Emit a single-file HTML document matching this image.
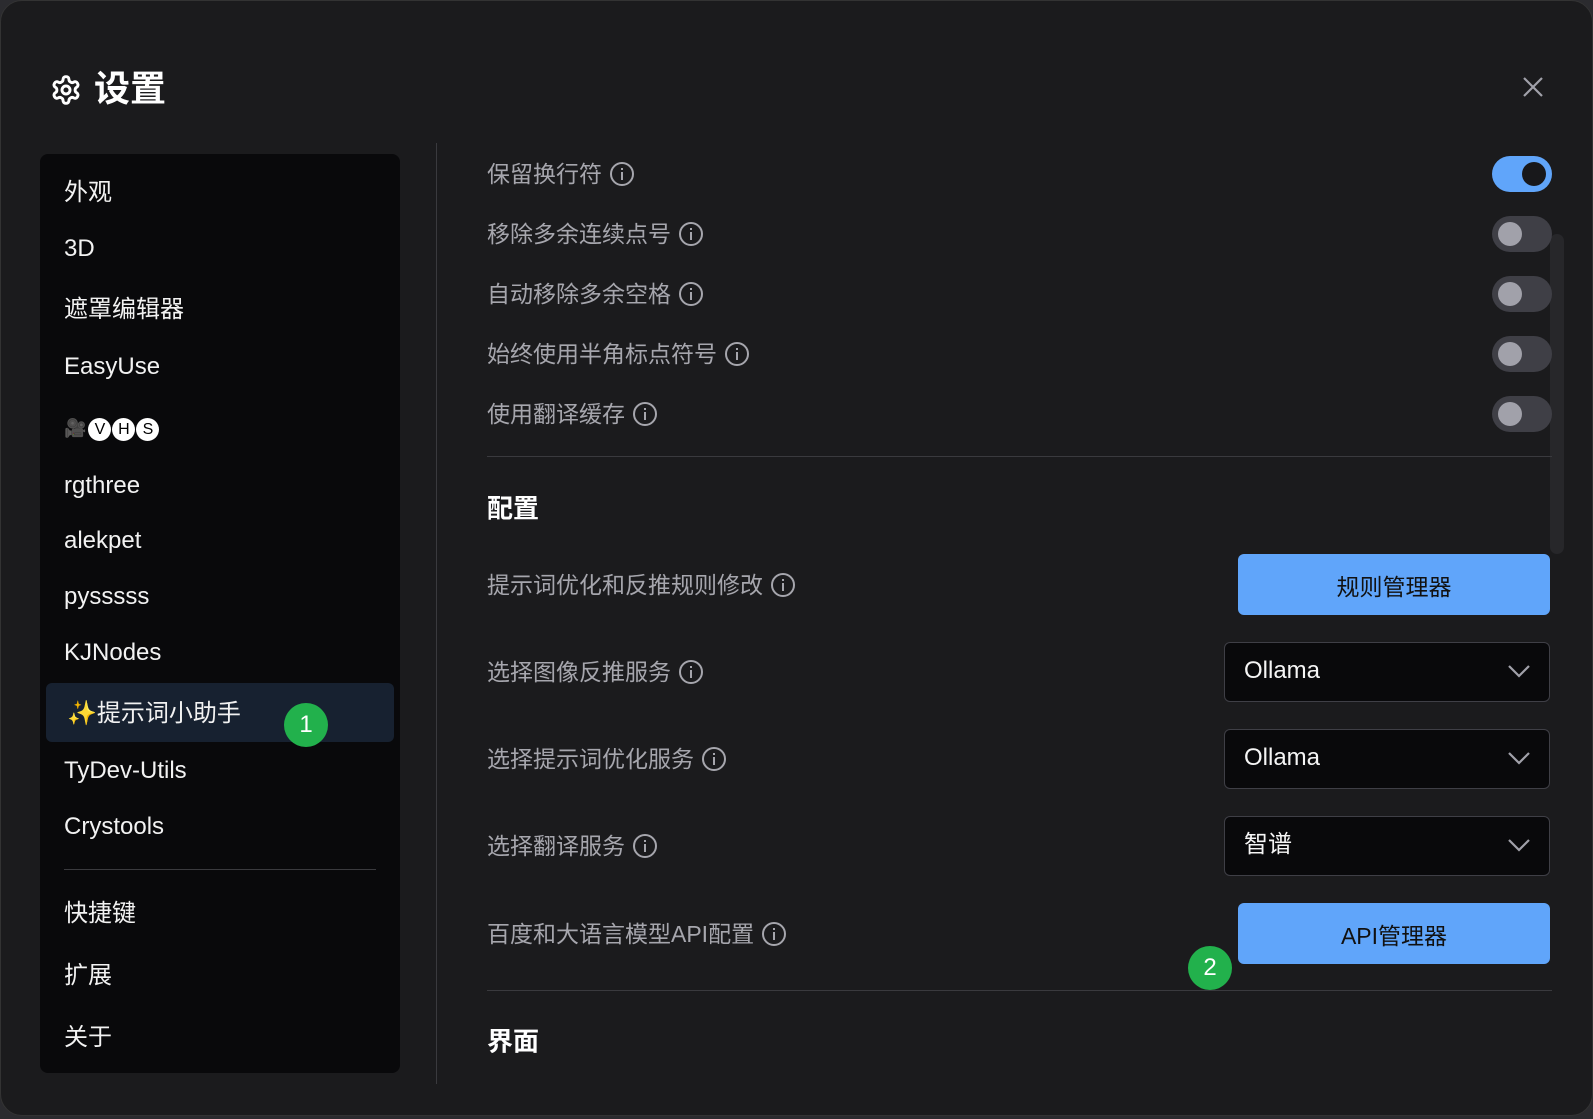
<!DOCTYPE html>
<html><head><meta charset="utf-8"><style>
*{margin:0;padding:0;box-sizing:border-box}
body{width:1593px;height:1119px;background:#2b2b2f;overflow:hidden;font-family:"Liberation Sans","Noto Sans CJK SC",sans-serif;position:relative}
#m{position:absolute;left:0;top:0;width:1593px;height:1116px;background:#1b1b1d;border-radius:22px;border:1px solid #333}
.a{position:absolute;white-space:nowrap}
.si{position:absolute;left:64px;color:#f2f2f2;font-size:24px;line-height:30px;transform:translateY(-50%)}
.lb{position:absolute;left:487px;color:#a6a6ad;font-size:23px;line-height:30px;transform:translateY(-50%);display:flex;align-items:center;gap:8px}
.ic{width:24px;height:24px;border:2px solid #a6a6ad;border-radius:50%;position:relative;display:inline-block}
.ic:before{content:"";position:absolute;left:9px;top:4px;width:2px;height:2px;background:#a6a6ad}
.ic:after{content:"";position:absolute;left:9px;top:8px;width:2px;height:8px;background:#a6a6ad}
.tg{position:absolute;left:1492px;width:60px;height:36px;border-radius:18px;background:#3f3f46}
.tg i{position:absolute;left:6px;top:6px;width:24px;height:24px;border-radius:50%;background:#a1a1aa}
.btn{position:absolute;left:1238px;width:312px;height:61px;background:#60a5fa;border-radius:6px;color:#111;font-size:23px;display:flex;align-items:center;justify-content:center}
.sel{position:absolute;left:1224px;width:326px;height:60px;background:#09090b;border:1px solid #3f3f46;border-radius:6px;color:#f5f5f5;font-size:24px;line-height:56px;padding-left:19px}
.sel svg{position:absolute;right:18px;top:20px}
.bd{position:absolute;width:44px;height:44px;border-radius:50%;background:#22b14c;color:#fff;font-size:24px;text-align:center;line-height:44px}
.hd{position:absolute;left:487px;color:#fff;font-size:26px;font-weight:bold;transform:translateY(-50%)}
.hr{position:absolute;left:487px;width:1065px;height:1px;background:#3a3a3e}
</style></head><body>
<div id="m"></div>
<svg class="a" style="left:50px;top:74px" width="32" height="32" viewBox="0 0 24 24" fill="none" stroke="#fff" stroke-width="2.2" stroke-linecap="round" stroke-linejoin="round"><path d="M12.22 2h-.44a2 2 0 0 0-2 2v.18a2 2 0 0 1-1 1.73l-.43.25a2 2 0 0 1-2 0l-.15-.08a2 2 0 0 0-2.730.73l-.22.38a2 2 0 0 0 .73 2.73l.15.1a2 2 0 0 1 1 1.72v.51a2 2 0 0 1-1 1.740l-.15.09a2 2 0 0 0-.73 2.73l.22.38a2 2 0 0 0 2.73.73l.15-.08a2 2 0 0 1 2 0l.43.25a2 2 0 0 1 1 1.73V20a2 2 0 0 0 2 2h.44a2 2 0 0 0 2-2v-.18a2 2 0 0 1 1-1.73l.43-.25a2 2 0 0 1 2 0l.15.08a2 2 0 0 0 2.73-.73l.22-.39a2 2 0 0 0-.73-2.73l-.15-.08a2 2 0 0 1-1-1.74v-.5a2 2 0 0 1 1-1.74l.15-.09a2 2 0 0 0 .73-2.73l-.22-.38a2 2 0 0 0-2.73-.73l-.15.08a2 2 0 0 1-2 0l-.43-.25a2 2 0 0 1-1-1.73V4a2 2 0 0 0-2-2z"/><circle cx="12" cy="12" r="3"/></svg>
<div class="a" style="left:94px;top:68px;color:#fff;font-size:36px;font-weight:bold;line-height:42px">设置</div>
<svg class="a" style="left:1523px;top:77px" width="20" height="20" viewBox="0 0 20 20" stroke="#a1a1aa" stroke-width="2.2"><path d="M1 1L19 19M19 1L1 19"/></svg>

<div class="a" style="left:40px;top:154px;width:360px;height:919px;background:#09090b;border-radius:8px"></div>
<div class="a" style="left:46px;top:683px;width:348px;height:59px;background:#172130;border-radius:6px"></div>
<div class="si" style="top:193px">外观</div>
<div class="si" style="top:249px">3D</div>
<div class="si" style="top:310px">遮罩编辑器</div>
<div class="si" style="top:367px">EasyUse</div>
<div class="si" style="top:428px;font-size:18px">🎥<span style="display:inline-block;width:23px;height:23px;border-radius:50%;background:#fff;color:#000;font-size:16px;line-height:23px;text-align:center;margin-left:2px">V</span><span style="display:inline-block;width:23px;height:23px;border-radius:50%;background:#fff;color:#000;font-size:16px;line-height:23px;text-align:center;margin-left:1px">H</span><span style="display:inline-block;width:23px;height:23px;border-radius:50%;background:#fff;color:#000;font-size:16px;line-height:23px;text-align:center;margin-left:1px">S</span></div>
<div class="si" style="top:486px">rgthree</div>
<div class="si" style="top:541px">alekpet</div>
<div class="si" style="top:597px">pysssss</div>
<div class="si" style="top:653px">KJNodes</div>
<div class="si" style="top:714px;left:67px"><span style="color:#f0a030">✨</span>提示词小助手</div>
<div class="si" style="top:771px">TyDev-Utils</div>
<div class="si" style="top:827px">Crystools</div>
<div class="a" style="left:64px;top:869px;width:312px;height:1px;background:#3a3a3e"></div>
<div class="si" style="top:914px">快捷键</div>
<div class="si" style="top:976px">扩展</div>
<div class="si" style="top:1038px">关于</div>
<div class="bd" style="left:284px;top:703px">1</div>

<div class="a" style="left:436px;top:143px;width:1px;height:941px;background:#3a3a3e"></div>
<div class="a" style="left:1550px;top:234px;width:14px;height:320px;background:#27272a;border-radius:7px"></div>

<div class="lb" style="top:174px">保留换行符<span class="ic"></span></div>
<div class="lb" style="top:234px">移除多余连续点号<span class="ic"></span></div>
<div class="lb" style="top:294px">自动移除多余空格<span class="ic"></span></div>
<div class="lb" style="top:354px">始终使用半角标点符号<span class="ic"></span></div>
<div class="lb" style="top:414px">使用翻译缓存<span class="ic"></span></div>
<div class="tg" style="top:156px;background:#60a5fa"><i style="left:30px;background:#18181b"></i></div>
<div class="tg" style="top:216px"><i></i></div>
<div class="tg" style="top:276px"><i></i></div>
<div class="tg" style="top:336px"><i></i></div>
<div class="tg" style="top:396px"><i></i></div>
<div class="hr" style="top:456px"></div>
<div class="hd" style="top:507px">配置</div>

<div class="lb" style="top:585px">提示词优化和反推规则修改<span class="ic"></span></div>
<div class="lb" style="top:672px">选择图像反推服务<span class="ic"></span></div>
<div class="lb" style="top:759px">选择提示词优化服务<span class="ic"></span></div>
<div class="lb" style="top:846px">选择翻译服务<span class="ic"></span></div>
<div class="lb" style="top:934px">百度和大语言模型API配置<span class="ic"></span></div>

<div class="btn" style="top:554px">规则管理器</div>
<div class="sel" style="top:642px">Ollama<svg width="24" height="16" viewBox="0 0 24 16" fill="none" stroke="#a1a1aa" stroke-width="2.2"><path d="M2 3l10 10 10-10"/></svg></div>
<div class="sel" style="top:729px">Ollama<svg width="24" height="16" viewBox="0 0 24 16" fill="none" stroke="#a1a1aa" stroke-width="2.2"><path d="M2 3l10 10 10-10"/></svg></div>
<div class="sel" style="top:816px">智谱<svg width="24" height="16" viewBox="0 0 24 16" fill="none" stroke="#a1a1aa" stroke-width="2.2"><path d="M2 3l10 10 10-10"/></svg></div>
<div class="btn" style="top:903px">API管理器</div>
<div class="bd" style="left:1188px;top:946px">2</div>
<div class="hr" style="top:990px"></div>
<div class="hd" style="top:1040px">界面</div>
</body></html>
